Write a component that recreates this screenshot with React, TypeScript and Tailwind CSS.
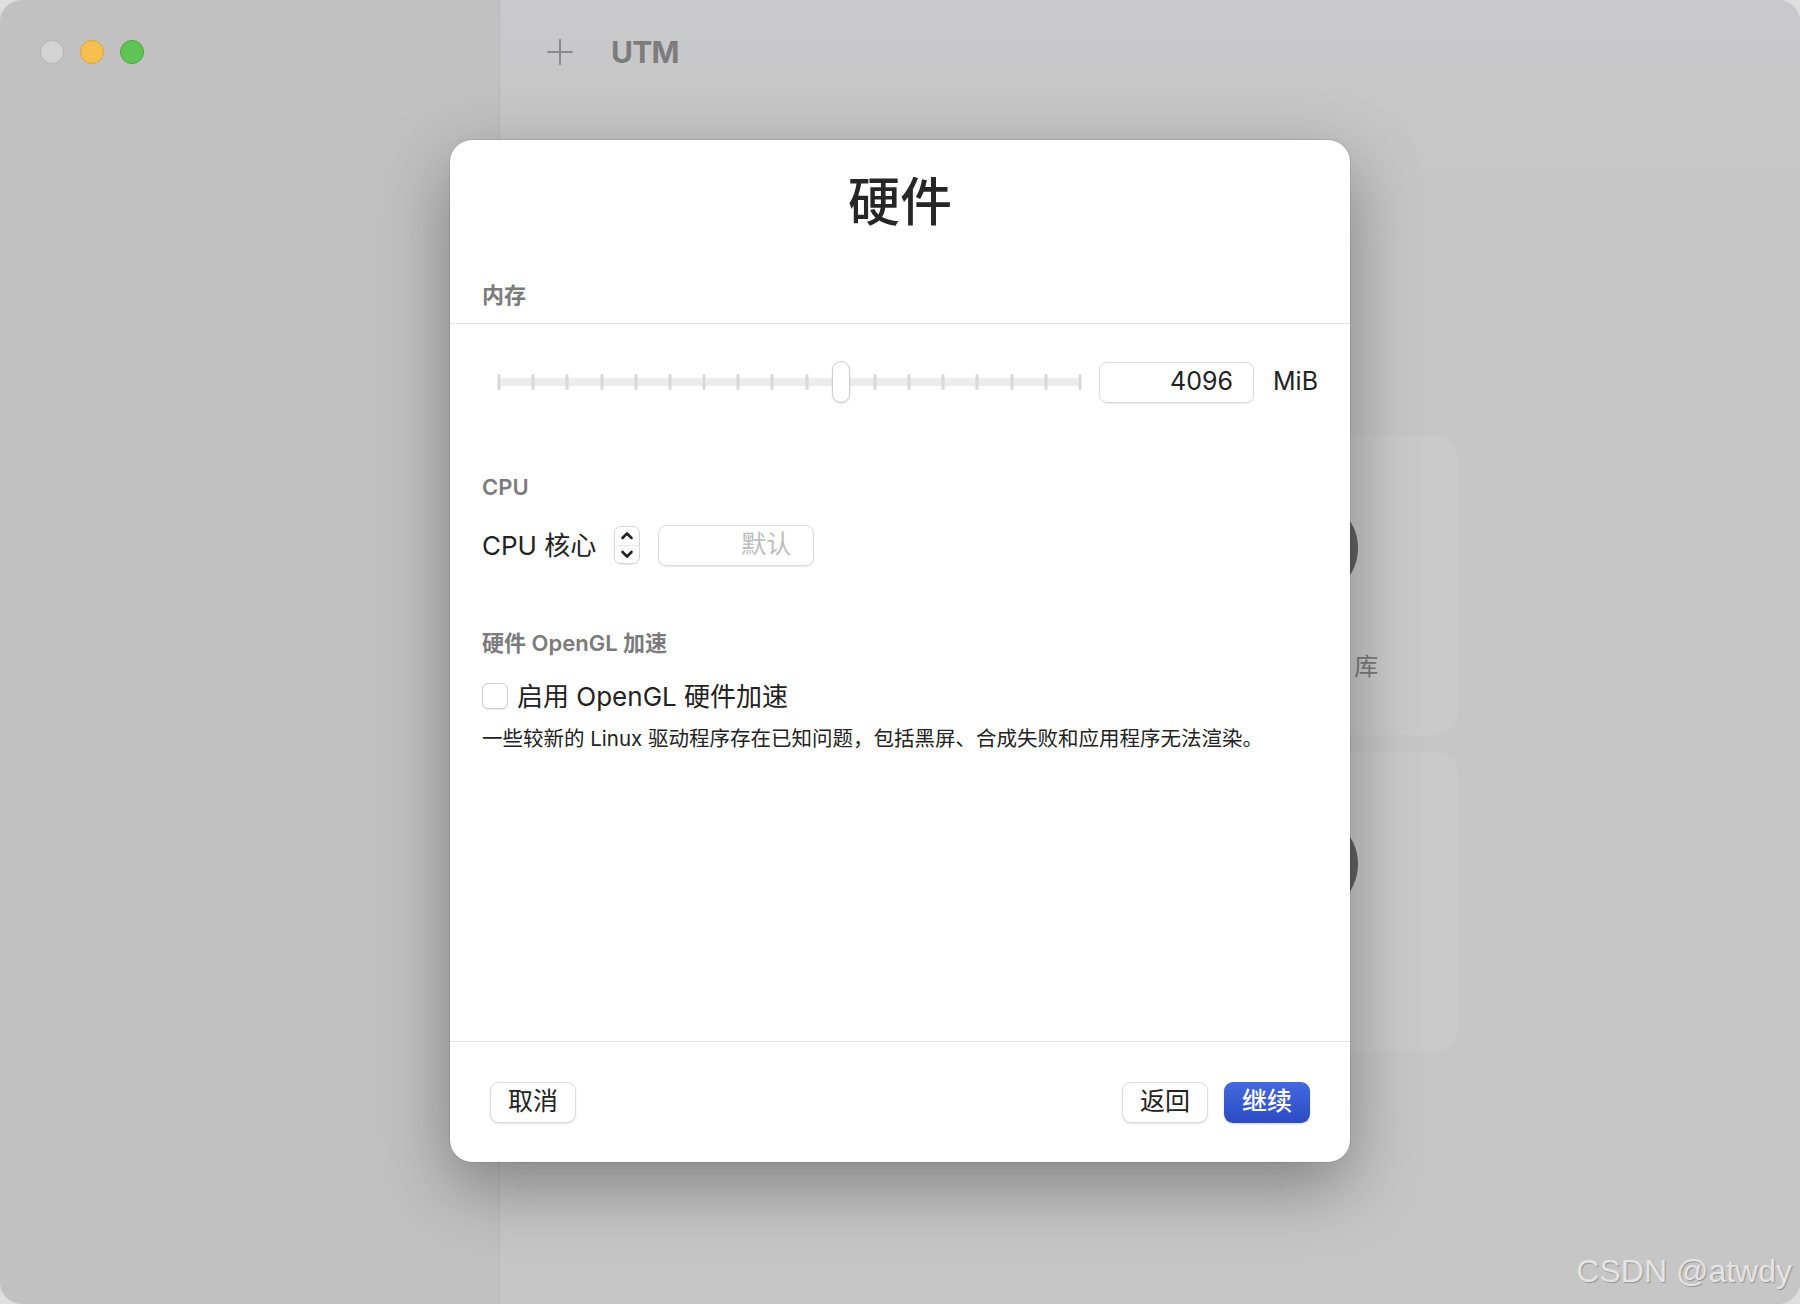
import React from "react";

const TICKS = 18;
const THUMB_AT = 10;

export default function App() {
  return (
    <div className="relative h-[1304px] w-[1800px] overflow-hidden bg-[#dedede] font-['Inter','Noto_Sans_CJK_SC',sans-serif] text-[#222]">
      {/* Window */}
      <div className="flex h-full w-full overflow-hidden rounded-[22px] bg-[#c6c6c6]">
        {/* Sidebar */}
        <aside className="h-full w-[500px] shrink-0 border-r border-[#b9b9b9] bg-[#c1c1c1]">
          <div className="flex gap-[16px] pl-[40px] pt-[40px]">
            <span className="h-[24px] w-[24px] rounded-full border border-[#b4b4b4] bg-[#d4d4d4]" />
            <span className="h-[24px] w-[24px] rounded-full border border-[#d9a23a] bg-[#f6bf4f]" />
            <span className="h-[24px] w-[24px] rounded-full border border-[#48a63e] bg-[#5ec454]" />
          </div>
        </aside>

        {/* Main area */}
        <main className="flex flex-1 flex-col bg-linear-to-b from-[#c9c8ca] to-[#c6c6c6] to-[200px]">
          <div className="flex h-[104px] items-center gap-[36px] pl-[45px]">
            <svg width="30" height="30" viewBox="0 0 30 30" className="text-[#8a8a8a]">
              <path d="M15 3v24M3 15h24" stroke="currentColor" strokeWidth="2" strokeLinecap="round" />
            </svg>
            <span className="text-[30px] font-bold tracking-tight text-[#7c7c7c]">UTM</span>
          </div>

          <div className="grid grid-cols-[300px_300px] justify-center gap-x-[16px] gap-y-[17px] pt-[332px]">
            <WelcomeCard label="创建一个新虚拟机" />
            <WelcomeCard label="浏览 UTM 库" />
            <WelcomeCard label="用户指南" />
            <WelcomeCard label="支持" />
          </div>
        </main>
      </div>

      {/* Sheet dialog */}
      <div className="absolute left-[450px] top-[140px] flex h-[1022px] w-[900px] flex-col overflow-hidden rounded-[22px] bg-white shadow-[0_24px_70px_rgba(0,0,0,0.35),0_0_0_1px_rgba(0,0,0,0.08)]">
        <div className="border-b border-[#e2e2e2] pb-[13px] pt-[31px]">
          <h1 className="text-center text-[52px] font-medium leading-[64px] text-[#262626]">硬件</h1>
          <SectionLabel className="mt-[45px] px-[32px]">内存</SectionLabel>
        </div>

        <div className="flex-1 px-[32px]">
          {/* Memory slider */}
          <div className="mt-[37px] flex h-[42px] items-center">
            <div className="relative h-[42px] flex-1">
              <div className="absolute left-[17px] right-[19px] top-0 h-full">
                <div className="absolute left-0 right-0 top-[17px] h-[8px] rounded-full bg-[#ececec]" />
                {Array.from({ length: TICKS }).map((_, i) =>
                  i === THUMB_AT ? null : (
                    <div
                      key={i}
                      className="absolute top-[13px] h-[16px] w-[3px] -translate-x-1/2 rounded-full bg-[#d8d8d8]"
                      style={{ left: `${(i / (TICKS - 1)) * 100}%` }}
                    />
                  )
                )}
                <div
                  className="absolute top-0 h-[42px] w-[18px] -translate-x-1/2 rounded-full border border-[#cfcfcf] bg-white shadow-[0_1px_2px_rgba(0,0,0,0.12)]"
                  style={{ left: `${(THUMB_AT / (TICKS - 1)) * 100}%` }}
                />
              </div>
            </div>
            <div className="flex h-[41px] w-[155px] items-center justify-end rounded-[8px] border border-[#dadada] pr-[20px] text-[25px] shadow-[0_1px_1px_rgba(0,0,0,0.08)]">
              4096
            </div>
            <span className="ml-[19px] text-[25px]">MiB</span>
          </div>

          {/* CPU */}
          <SectionLabel className="mt-[69px]">CPU</SectionLabel>
          <div className="mt-[22px] flex h-[42px] items-center">
            <span className="text-[26px]">CPU 核心</span>
            <div className="ml-[18px] flex h-[38px] w-[26px] flex-col overflow-hidden rounded-[7px] border border-[#d6d6d6] shadow-[0_1px_1px_rgba(0,0,0,0.08)]">
              <div className="flex flex-1 items-center justify-center border-b border-[#e4e4e4]">
                <svg width="14" height="9" viewBox="0 0 14 9">
                  <path d="M2.5 7l4.5-4.5 4.5 4.5" fill="none" stroke="#222" strokeWidth="2.6" strokeLinecap="round" strokeLinejoin="round" />
                </svg>
              </div>
              <div className="flex flex-1 items-center justify-center">
                <svg width="14" height="9" viewBox="0 0 14 9">
                  <path d="M2.5 2l4.5 4.5 4.5-4.5" fill="none" stroke="#222" strokeWidth="2.6" strokeLinecap="round" strokeLinejoin="round" />
                </svg>
              </div>
            </div>
            <div className="ml-[18px] flex h-[41px] w-[156px] items-center justify-end rounded-[8px] border border-[#dadada] pr-[22px] text-[25px] text-[#bcbcbc] shadow-[0_1px_1px_rgba(0,0,0,0.08)]">
              默认
            </div>
          </div>

          {/* OpenGL */}
          <SectionLabel className="mt-[62px]">硬件 OpenGL 加速</SectionLabel>
          <label className="mt-[23px] flex h-[30px] items-center">
            <span className="h-[26px] w-[26px] rounded-[6px] border border-[#cfcfcf] bg-white shadow-[0_1px_1px_rgba(0,0,0,0.08)]" />
            <span className="ml-[9px] text-[26px]">启用 OpenGL 硬件加速</span>
          </label>
          <p className="mt-[14px] text-[20.5px] leading-[28px]">
            一些较新的 Linux 驱动程序存在已知问题，包括黑屏、合成失败和应用程序无法渲染。
          </p>
        </div>

        {/* Footer */}
        <div className="flex h-[121px] items-center justify-between border-t border-[#e2e2e2] px-[40px]">
          <DialogButton>取消</DialogButton>
          <div className="flex gap-[16px]">
            <DialogButton>返回</DialogButton>
            <button className="h-[41px] w-[86px] rounded-[9px] bg-linear-to-b from-[#4468df] to-[#2b4bc3] text-[25px] font-medium text-white shadow-[0_1px_2px_rgba(0,0,0,0.2)]">
              继续
            </button>
          </div>
        </div>
      </div>

      {/* Watermark */}
      <span className="absolute bottom-[9px] right-[8px] font-['Liberation_Sans',sans-serif] text-[32px] text-[#e4e4e4] [text-shadow:1px_1px_1px_rgba(0,0,0,0.25)]">
        CSDN @atwdy
      </span>
    </div>
  );
}

function SectionLabel({ children, className = "" }: { children: React.ReactNode; className?: string }) {
  return <div className={`text-[22px] font-semibold leading-[30px] text-[#7b7b7b] ${className}`}>{children}</div>;
}

function DialogButton({ children }: { children: React.ReactNode }) {
  return (
    <button className="h-[41px] w-[86px] rounded-[9px] border border-[#dcdcdc] bg-white text-[25px] text-[#222] shadow-[0_1px_2px_rgba(0,0,0,0.12)]">
      {children}
    </button>
  );
}

function WelcomeCard({ label }: { label: string }) {
  return (
    <div className="flex h-[299px] flex-col items-center rounded-[22px] bg-[#cacaca] pt-[62px]">
      <div className="h-[100px] w-[100px] rounded-full bg-[#636363]" />
      <span className="mt-[53px] text-[24px] leading-[32px] text-[#7b7b7b]">{label}</span>
    </div>
  );
}
